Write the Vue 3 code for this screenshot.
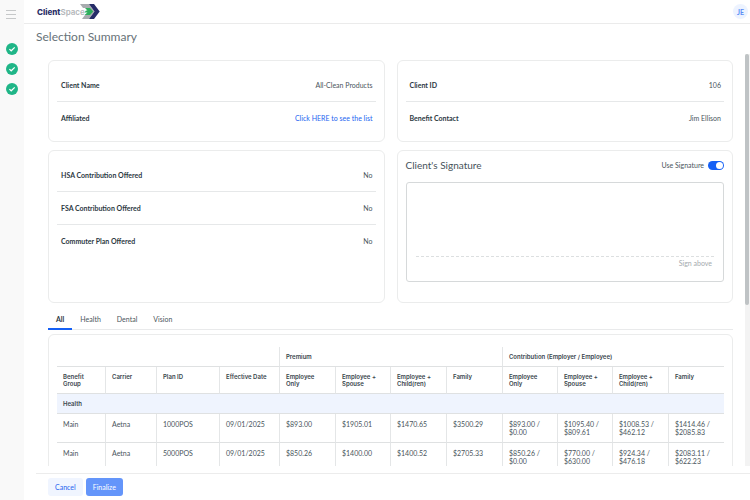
<script setup>
import { ref } from 'vue'

const steps = ['Details', 'Plans', 'Contributions']

const clientRows = [
  { label: 'Client Name', value: 'All-Clean Products' },
  { label: 'Affiliated', value: 'Click HERE to see the list', link: true },
]
const contactRows = [
  { label: 'Client ID', value: '106' },
  { label: 'Benefit Contact', value: 'Jim Ellison' },
]
const offerRows = [
  { label: 'HSA Contribution Offered', value: 'No' },
  { label: 'FSA Contribution Offered', value: 'No' },
  { label: 'Commuter Plan Offered', value: 'No' },
]
const cards = [
  { key: 'client', rows: clientRows },
  { key: 'contact', rows: contactRows },
  { key: 'offers', rows: offerRows },
]

const tabs = ['All', 'Health', 'Dental', 'Vision']
const activeTab = ref('All')
const useSignature = ref(true)

const columns = [
  { name: 'Benefit Group', share: 49 },
  { name: 'Carrier', share: 51 },
  { name: 'Plan ID', share: 63 },
  { name: 'Effective Date', share: 60 },
  { name: 'Employee Only', share: 56 },
  { name: 'Employee + Spouse', share: 55 },
  { name: 'Employee + Child(ren)', share: 56 },
  { name: 'Family', share: 56 },
  { name: 'Employee Only', share: 55 },
  { name: 'Employee + Spouse', share: 55 },
  { name: 'Employee + Child(ren)', share: 56 },
  { name: 'Family', share: 55 },
]
const total = columns.reduce((sum, c) => sum + c.share, 0)
const colWidth = (c) => ({ width: (c.share / total) * 100 + '%' })

const plans = [
  ['Main', 'Aetna', '1000POS', '09/01/2025', '$893.00', '$1905.01', '$1470.65', '$3500.29',
    '$893.00 / $0.00', '$1095.40 / $809.61', '$1008.53 / $462.12', '$1414.46 / $2085.83'],
  ['Main', 'Aetna', '5000POS', '09/01/2025', '$850.26', '$1400.00', '$1400.52', '$2705.33',
    '$850.26 / $0.00', '$770.00 / $630.00', '$924.34 / $476.18', '$2083.11 / $622.23'],
]
</script>

<template>
  <div class="shell">
    <nav class="rail">
      <button class="menu" type="button"><i></i><i></i><i></i></button>
      <ol class="steps">
        <li v-for="s in steps" :key="s">
          <svg viewBox="0 0 12 12" class="check">
            <circle cx="6" cy="6" r="6" fill="#1fb587" />
            <path d="M3.4 6.1 5.2 7.8 8.7 4.4" fill="none" stroke="#fff" stroke-width="1.2" />
          </svg>
        </li>
      </ol>
    </nav>

    <div class="page">
      <header class="topbar">
        <a href="#" class="logo">
          <span class="logo-client">Client</span><span class="logo-space">Space</span>
          <svg viewBox="0 0 20 15" class="logo-mark">
            <path d="M0 0H9L14.500 7.500 9 15H2L5 11H9L12 7.500 9 4H3Z" fill="#a7abae" />
            <path d="M9 0H14L19.700 7.500 14 15H9L14.500 7.500Z" fill="#252c68" />
            <path d="M5 4H10L13.200 7.500 10 11H4.500L7.500 8.500H4.500L6 6.500H7.500Z" fill="#2eae5c" />
          </svg>
        </a>
        <button class="avatar" type="button">JE</button>
      </header>

      <h1 class="title">Selection Summary</h1>

      <div class="viewport">
        <main class="content">
          <div class="cards">
            <section v-for="card in cards" :key="card.key" class="card">
              <dl class="rows">
                <div v-for="row in card.rows" :key="row.label" class="row">
                  <dt>{{ row.label }}</dt>
                  <dd>
                    <a v-if="row.link" href="#">{{ row.value }}</a>
                    <template v-else>{{ row.value }}</template>
                  </dd>
                </div>
              </dl>
            </section>

            <section class="card signature">
              <div class="signature-head">
                <h2>Client's Signature</h2>
                <label class="toggle" for="use-signature">
                  Use Signature
                  <input id="use-signature" v-model="useSignature" type="checkbox" role="switch" />
                </label>
              </div>
              <div class="pad">
                <p>Sign above</p>
              </div>
            </section>
          </div>

          <div class="tabs" role="tablist">
            <button
              v-for="t in tabs"
              :key="t"
              type="button"
              role="tab"
              :aria-selected="activeTab === t"
              :class="['tab', { active: activeTab === t }]"
              @click="activeTab = t"
            >{{ t }}</button>
          </div>

          <section class="card table-card">
            <table>
              <colgroup>
                <col v-for="(c, i) in columns" :key="i" :style="colWidth(c)" />
              </colgroup>
              <thead>
                <tr class="groups">
                  <td colspan="4"></td>
                  <th colspan="4">Premium</th>
                  <th colspan="4">Contribution (Employer / Employee)</th>
                </tr>
                <tr class="names">
                  <th v-for="(c, i) in columns" :key="i">{{ c.name }}</th>
                </tr>
              </thead>
              <tbody>
                <tr class="band">
                  <th colspan="12">Health</th>
                </tr>
                <tr v-for="(p, i) in plans" :key="i" class="plan">
                  <td v-for="(v, j) in p" :key="j">{{ v }}</td>
                </tr>
              </tbody>
            </table>
          </section>
        </main>
        <div class="track"><div class="thumb"></div></div>
      </div>

      <footer class="actions">
        <button type="button" class="btn cancel">Cancel</button>
        <button type="button" class="btn finalize">Finalize</button>
      </footer>
    </div>
  </div>
</template>

<style>
body {
  background: #fff;
}
</style>

<style scoped>
* {
  box-sizing: border-box;
  margin: 0;
  padding: 0;
}
.shell {
  display: flex;
  height: 100vh;
  font-family: Lato, "Liberation Sans", sans-serif;
  font-size: 7px;
  line-height: 8px;
  color: #4a555c;
}
button {
  font: inherit;
  color: inherit;
  border: 0;
  background: none;
  cursor: pointer;
}
a {
  color: #2464f0;
  text-decoration: none;
}
.rail {
  flex: none;
  width: 24px;
  background: #f9f9f9;
}
.menu {
  display: flex;
  flex-direction: column;
  gap: 3px;
  padding: 10px 0 0 6px;
}
.menu i {
  width: 10px;
  height: 1px;
  background: #c6c8c9;
}
.steps {
  display: grid;
  gap: 8px;
  padding: 24px 0 0 6px;
  list-style: none;
}
.check {
  display: block;
  width: 12px;
  height: 12px;
}
.page {
  flex: 1;
  min-width: 0;
  display: flex;
  flex-direction: column;
}
.topbar {
  flex: none;
  display: flex;
  align-items: center;
  justify-content: space-between;
  height: 24px;
  padding: 0 2px 0 13px;
  border-bottom: 1px solid #ebebeb;
}
.logo {
  display: flex;
  align-items: center;
  font-family: Inter, "DejaVu Sans", sans-serif;
  font-size: 8px;
  font-weight: 800;
}
.logo-client {
  color: #2b3068;
}
.logo-space {
  color: #b3b6b9;
  font-weight: 600;
}
.logo-mark {
  width: 20px;
  height: 15px;
  margin-left: -5px;
}
.avatar {
  width: 15px;
  height: 15px;
  border-radius: 50%;
  background: #edf3ff;
  color: #5b8df5;
  font-weight: 700;
}
.title {
  flex: none;
  padding: 5px 12px 0;
  font-size: 12px;
  line-height: 16px;
  font-weight: 400;
  color: #677278;
}
.viewport {
  flex: 1;
  min-height: 0;
  display: flex;
  justify-content: space-between;
  padding-top: 9px;
}
.content {
  flex: 1;
  min-width: 0;
  overflow: hidden;
  padding: 6px 12px 0 24px;
}
.track {
  flex: none;
  width: 5px;
  background: #f3f3f3;
}
.thumb {
  height: 61%;
  margin-right: 1px;
  border-radius: 2px;
  background: #bfc3c5;
}
.cards {
  display: grid;
  grid-template-columns: 1fr 1fr;
  gap: 8px 12px;
}
.card {
  border: 1px solid #ebecec;
  border-radius: 6px;
  padding: 8px;
}
.row {
  display: flex;
  align-items: center;
  justify-content: space-between;
  height: 33px;
  padding: 0 3px 0 4px;
  border-bottom: 1px solid #e6e8e9;
}
.row:last-child {
  height: 31px;
  border-bottom: 0;
}
dt {
  font-weight: 700;
  color: #2c383f;
}
.signature {
  padding-bottom: 20px;
}
.signature-head {
  display: flex;
  align-items: center;
  justify-content: space-between;
  height: 12px;
}
h2 {
  font-size: 10px;
  line-height: 12px;
  font-weight: 400;
  color: #46525a;
}
.toggle {
  display: flex;
  align-items: center;
  gap: 4px;
}
.toggle input {
  appearance: none;
  width: 16px;
  height: 9px;
  padding: 1px;
  border-radius: 5px;
  background: #b8bdc1;
  display: flex;
}
.toggle input::before {
  content: "";
  width: 7px;
  height: 7px;
  border-radius: 50%;
  background: #fff;
}
.toggle input:checked {
  justify-content: flex-end;
  background: #1560f5;
}
.pad {
  height: 100px;
  margin-top: 11px;
  padding: 73px 9px 0;
  border: 1px solid #d6d9da;
  border-radius: 3px;
}
.pad p {
  padding: 2px 2px 0;
  border-top: 1px dashed #dcdfe0;
  text-align: right;
  color: #a4aaae;
}
.tabs {
  display: flex;
  height: 27px;
  border-bottom: 1px solid #e9eaeb;
}
.tab {
  height: 27px;
  padding: 6px 8px 0;
  border-bottom: 2px solid transparent;
}
.tab.active {
  border-bottom-color: #1560f5;
  font-weight: 700;
  color: #2c383f;
}
.table-card {
  margin-top: 4px;
  padding: 12px 8px;
}
table {
  width: 100%;
  table-layout: fixed;
  border-collapse: separate;
  border-spacing: 0;
}
th,
td {
  padding: 0 8px 0 6px;
  text-align: left;
  vertical-align: top;
  border-right: 1px solid #e4e6e7;
  border-bottom: 1px solid #dfe1e2;
}
tr > :last-child {
  border-right: 0;
}
th {
  font-family: Inter, "Liberation Sans", sans-serif;
  font-size: 6px;
  line-height: 7px;
  font-weight: 600;
  color: #3a464d;
}
.groups > * {
  height: 20px;
  vertical-align: middle;
}
.names th {
  height: 27px;
  padding-top: 6px;
}
.band th {
  height: 20px;
  vertical-align: middle;
  background: #eff4fe;
}
.plan td {
  height: 29px;
  padding-top: 6px;
}
.actions {
  flex: none;
  display: flex;
  gap: 3px;
  height: 27px;
  margin: 7px 0 0 12px;
  padding: 4px 12px 0;
  border-top: 1px solid #ececec;
}
.btn {
  height: 18px;
  padding: 0 7px;
  border-radius: 3px;
}
.cancel {
  background: #f0f5ff;
  color: #2464f0;
}
.finalize {
  background: #6495fa;
  color: #fff;
}
</style>
